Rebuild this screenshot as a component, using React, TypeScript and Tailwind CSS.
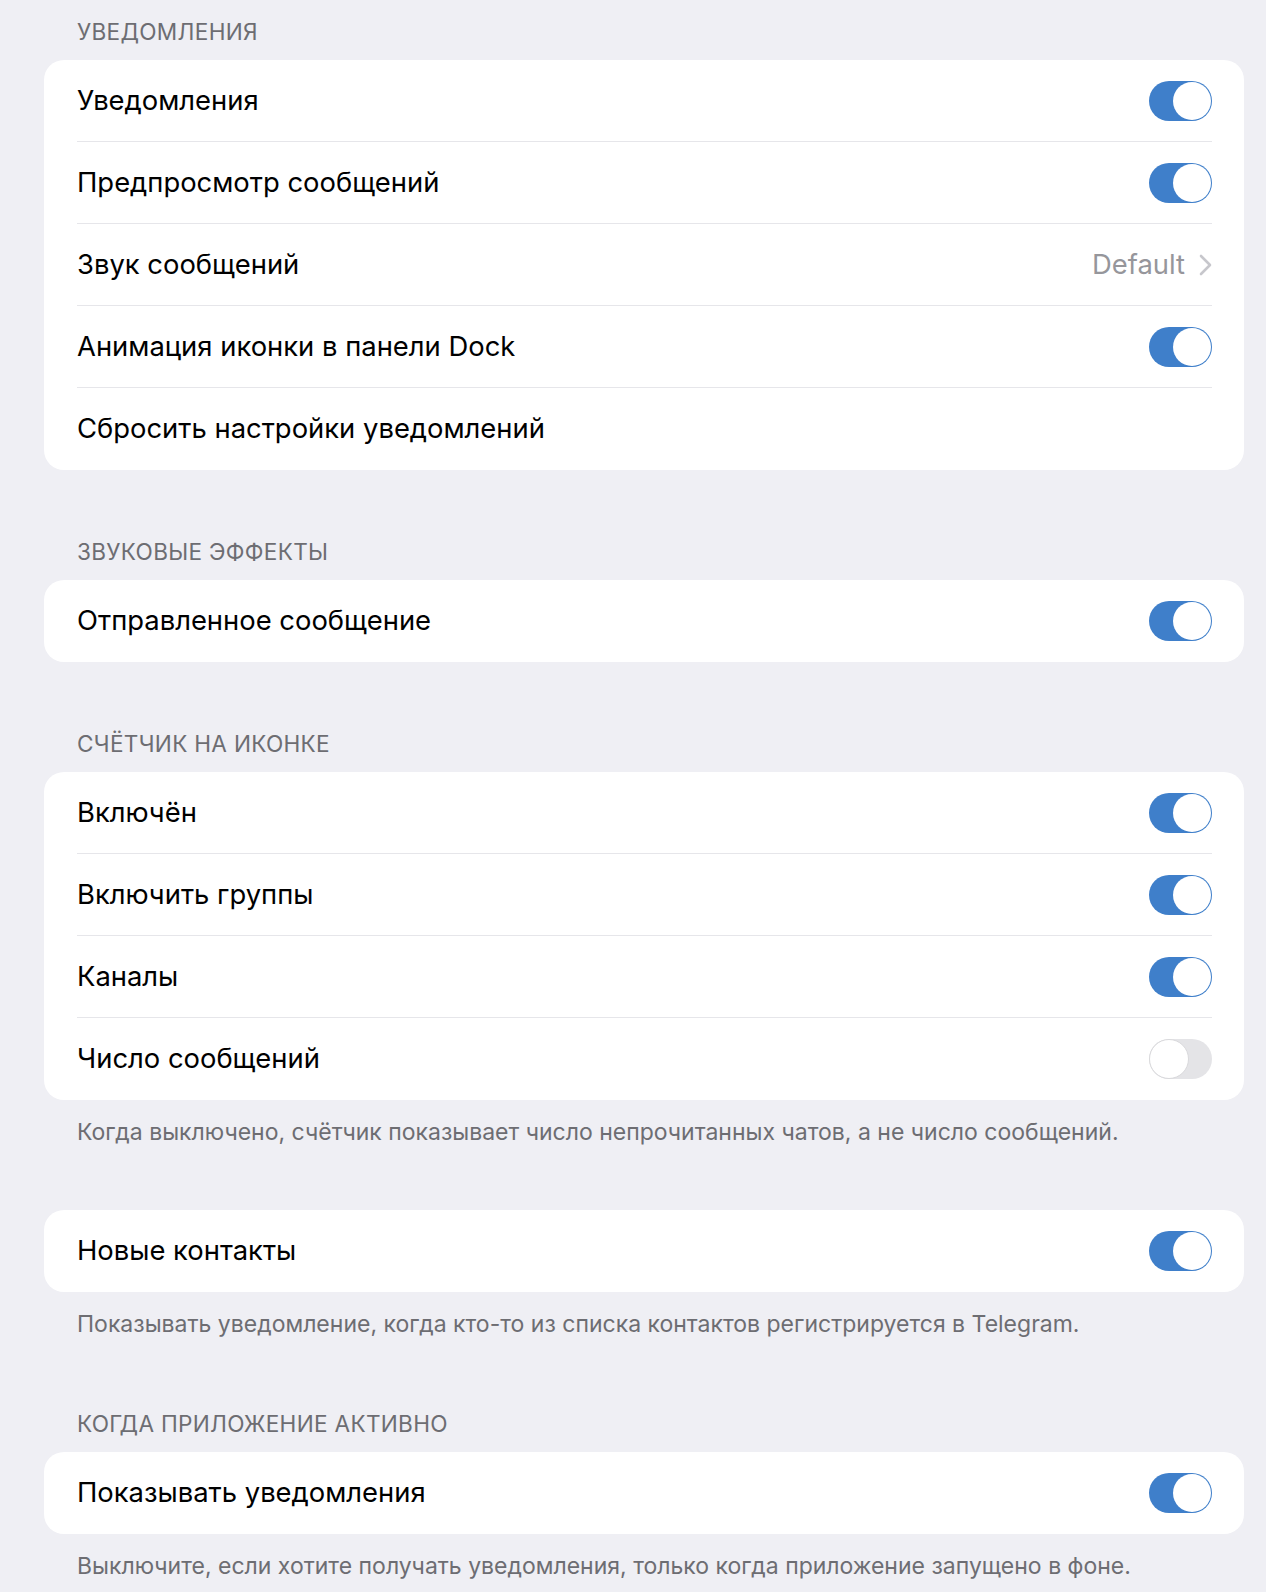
import React from "react";

type Row = { label: string; kind: "on" | "off" | "default" | "none" };

function Toggle({ on }: { on: boolean }) {
  return on ? (
    <div className="flex h-[40px] w-[63px] shrink-0 items-center justify-end rounded-full bg-[#3f7fca] p-[1px]">
      <div className="h-[38px] w-[38px] rounded-full bg-white" />
    </div>
  ) : (
    <div className="flex h-[40px] w-[63px] shrink-0 items-center justify-start rounded-full bg-[#e4e4e7]">
      <div className="h-[40px] w-[40px] rounded-full border border-[#d9d9dc] bg-white" />
    </div>
  );
}

function Chevron() {
  return (
    <svg width="13" height="22" viewBox="0 0 13 22" fill="none">
      <path d="M2 2 L11 11 L2 20" stroke="#c7c7cc" strokeWidth="2.6" strokeLinecap="round" strokeLinejoin="round" />
    </svg>
  );
}

function Card({ rows }: { rows: Row[] }) {
  return (
    <div className="rounded-[20px] bg-white pl-[33px] pr-[32px]">
      {rows.map((r, i) => (
        <div
          key={i}
          className={
            "flex h-[82px] items-center justify-between " +
            (i < rows.length - 1 ? "border-b border-[#e6e6ea]" : "")
          }
        >
          <span className="text-[27.4px] leading-none text-black">{r.label}</span>
          {r.kind === "on" && <Toggle on />}
          {r.kind === "off" && <Toggle on={false} />}
          {r.kind === "default" && (
            <div className="flex items-center gap-[14px]">
              <span className="text-[27.4px] leading-none text-[#96969b]">Default</span>
              <Chevron />
            </div>
          )}
        </div>
      ))}
    </div>
  );
}

function Header({ children, className = "" }: { children: React.ReactNode; className?: string }) {
  return (
    <div className={"pb-[14px] pl-[33px] text-[22.6px] leading-[28px] tracking-[0.3px] text-[#6d6d72] " + className}>
      {children}
    </div>
  );
}

function Footer({ children, className = "" }: { children: React.ReactNode; className?: string }) {
  return (
    <div className={"pt-[18px] pl-[33px] text-[23px] leading-[28px] text-[#6d6d72] " + className}>{children}</div>
  );
}

export default function App() {
  return (
    <div
      className="min-h-[1592px] w-full bg-[#efeff4] pl-[44px] pr-[22px] pt-[18px]"
      style={{ fontFamily: "Inter, 'Noto Sans', sans-serif" }}
    >
      <Header>УВЕДОМЛЕНИЯ</Header>
      <Card
        rows={[
          { label: "Уведомления", kind: "on" },
          { label: "Предпросмотр сообщений", kind: "on" },
          { label: "Звук сообщений", kind: "default" },
          { label: "Анимация иконки в панели Dock", kind: "on" },
          { label: "Сбросить настройки уведомлений", kind: "none" },
        ]}
      />
      <Header className="mt-[68px]">ЗВУКОВЫЕ ЭФФЕКТЫ</Header>
      <Card rows={[{ label: "Отправленное сообщение", kind: "on" }]} />
      <Header className="mt-[68px]">СЧЁТЧИК НА ИКОНКЕ</Header>
      <Card
        rows={[
          { label: "Включён", kind: "on" },
          { label: "Включить группы", kind: "on" },
          { label: "Каналы", kind: "on" },
          { label: "Число сообщений", kind: "off" },
        ]}
      />
      <Footer className="mb-[64px]">
        Когда выключено, счётчик показывает число непрочитанных чатов, а не число сообщений.
      </Footer>
      <Card rows={[{ label: "Новые контакты", kind: "on" }]} />
      <Footer className="mb-[72px]">
        Показывать уведомление, когда кто-то из списка контактов регистрируется в Telegram.
      </Footer>
      <Header>КОГДА ПРИЛОЖЕНИЕ АКТИВНО</Header>
      <Card rows={[{ label: "Показывать уведомления", kind: "on" }]} />
      <Footer>Выключите, если хотите получать уведомления, только когда приложение запущено в фоне.</Footer>
    </div>
  );
}
